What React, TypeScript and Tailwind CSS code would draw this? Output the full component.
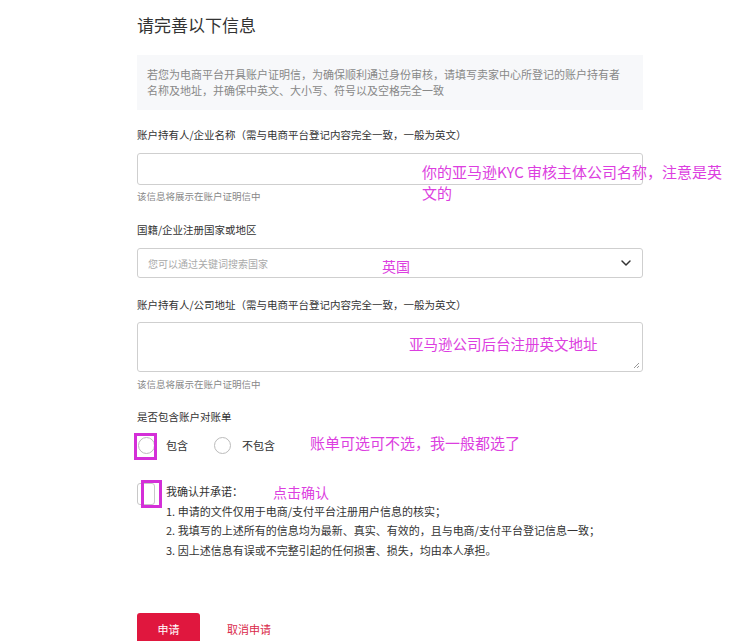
import { ChevronDown } from 'lucide-react';

const font = { fontFamily: '"Noto Sans CJK SC", "Noto Sans", sans-serif' };

function Note({ className, children }: { className: string; children: React.ReactNode }) {
  return <div className={`absolute text-[#dc3ee0] ${className}`}>{children}</div>;
}

export default function App() {
  return (
    <div style={font} className="relative h-[641px] w-[746px] overflow-hidden bg-white text-[#333]">
      <div className="ml-[137px] w-[506px] pt-[14px]">
        <h1 className="text-[17px] leading-[22px] text-[#333]">请完善以下信息</h1>

        <div className="mt-[19px] bg-[#f7f8fa] pl-[10px] pr-[14px] pt-[11px] pb-[12px] text-[11px] leading-[16px] text-[#888]">
          若您为电商平台开具账户证明信，为确保顺利通过身份审核，请填写卖家中心所登记的账户持有者名称及地址，并确保中英文、大小写、符号以及空格完全一致
        </div>

        <div className="mt-[17px] text-[10.5px] leading-[16px]">账户持有人/企业名称（需与电商平台登记内容完全一致，一般为英文）</div>
        <div className="mt-[10px] h-[32px] rounded-[3px] border border-[#cfcfcf]" />
        <div className="mt-[4px] text-[9.5px] leading-[14px] text-[#888]">该信息将展示在账户证明信中</div>

        <div className="mt-[19px] text-[10.5px] leading-[16px]">国籍/企业注册国家或地区</div>
        <div className="mt-[10px] flex h-[30px] items-center justify-between rounded-[3px] border border-[#cfcfcf] pl-[10px] pr-[8px]">
          <span className="text-[10px] text-[#aaa]">您可以通过关键词搜索国家</span>
          <ChevronDown className="h-[16px] w-[16px] text-[#333]" strokeWidth={2.2} />
        </div>

        <div className="mt-[19px] text-[10.5px] leading-[16px]">账户持有人/公司地址（需与电商平台登记内容完全一致，一般为英文）</div>
        <div className="relative mt-[9px] h-[50px] rounded-[3px] border border-[#cfcfcf]">
          <svg className="absolute bottom-[2px] right-[2px]" width="7" height="7" viewBox="0 0 7 7">
            <path d="M1 6 L6 1 M4 6 L6 4" stroke="#999" strokeWidth="1" />
          </svg>
        </div>
        <div className="mt-[5px] text-[9.5px] leading-[14px] text-[#888]">该信息将展示在账户证明信中</div>

        <div className="mt-[18px] text-[10.5px] leading-[16px]">是否包含账户对账单</div>
        <div className="mt-[12px] flex items-center text-[11px]">
          <span className="ml-[1px] h-[17px] w-[17px] rounded-full border border-[#bbb]" />
          <span className="ml-[11px]">包含</span>
          <span className="ml-[26px] h-[17px] w-[17px] rounded-full border border-[#bbb]" />
          <span className="ml-[11px]">不包含</span>
        </div>

        <div className="mt-[28px] flex items-start">
          <span className="mt-[1px] h-[22px] w-[18px] shrink-0 rounded-[3px] border border-[#c8c8c8]" />
          <div className="ml-[11px] text-[11px] leading-[19.5px]">
            <div>我确认并承诺：</div>
            <div>1. 申请的文件仅用于电商/支付平台注册用户信息的核实；</div>
            <div>2. 我填写的上述所有的信息均为最新、真实、有效的，且与电商/支付平台登记信息一致；</div>
            <div>3. 因上述信息有误或不完整引起的任何损害、损失，均由本人承担。</div>
          </div>
        </div>

        <div className="mt-[53px] flex items-center">
          <button className="h-[32px] w-[63px] rounded-[3px] bg-[#e0173e] text-[11px] text-white">申请</button>
          <button className="ml-[27px] text-[11px] text-[#d9284a]">取消申请</button>
        </div>
      </div>

      <Note className="left-[422px] top-[161px] w-[312px] text-[15px] leading-[21px]">你的亚马逊KYC 审核主体公司名称，注意是英文的</Note>
      <Note className="left-[382px] top-[256px] text-[14px] leading-[20px]">英国</Note>
      <Note className="left-[409px] top-[334px] text-[14.5px] leading-[20px]">亚马逊公司后台注册英文地址</Note>
      <Note className="left-[310px] top-[432px] text-[15px] leading-[22px]">账单可选可不选，我一般都选了</Note>
      <Note className="left-[273px] top-[484px] text-[14px] leading-[16px]">点击确认</Note>

      <div className="absolute left-[134px] top-[433px] h-[27px] w-[23px] border-[3px] border-[#d42fd8]" />
      <div className="absolute left-[141px] top-[480px] h-[28px] w-[21px] border-[3px] border-[#d42fd8]" />
    </div>
  );
}
